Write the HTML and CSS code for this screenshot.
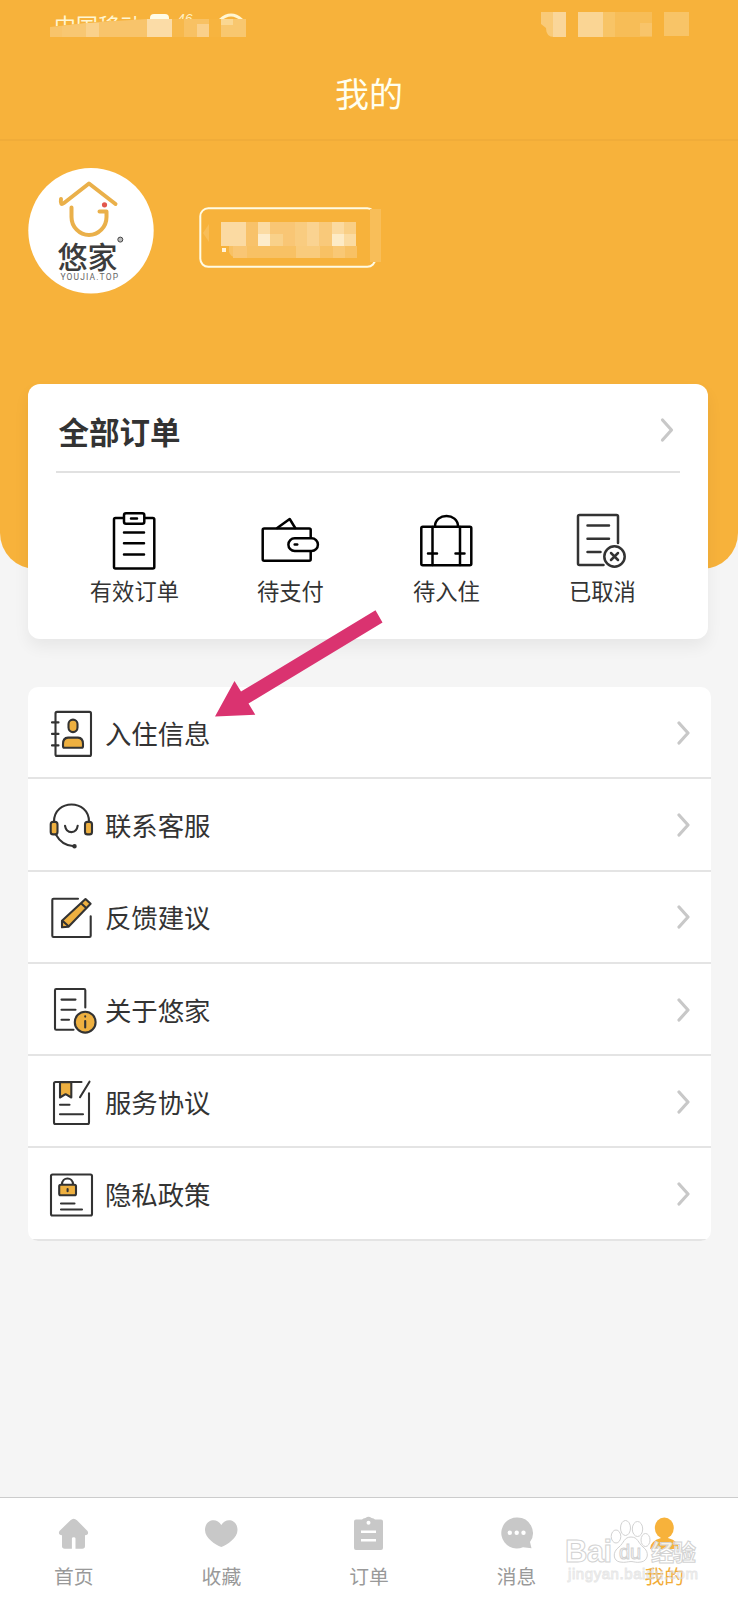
FILE: index.html
```html
<!DOCTYPE html>
<html lang="zh-CN">
<head>
<meta charset="utf-8">
<title>我的</title>
<link rel="stylesheet" href="styles.css">
</head>
<body>
<div class="screen">
  <div class="hero">
    <svg class="statusbar" viewBox="0 0 738 50" width="738" height="50">
      <text x="54" y="33.500" class="carrier" textLength="88">中国移动</text>
      <rect x="150" y="14" width="19" height="16" rx="4" fill="#fffbe6"/>
      <text x="177" y="24" class="signal">46</text>
      <path d="M220 20q11-10 22 0" fill="none" stroke="#fff6d2" stroke-width="3"/>
      <path d="M48 27L98 22L148 19V38H48z" fill="#f7b23b"/>
      <path d="M50 27L98 22L148 19V37H50z" fill="#f8c46b"/>
      <path d="M62 26L86 23V37H62z" fill="#f8c772"/>
      <rect x="86" y="23" width="13" height="14" fill="#fad18b"/>
      <rect x="147" y="19" width="25" height="18" fill="#fbdca7"/>
      <rect x="172" y="19" width="12" height="18" fill="#f7b84b"/>
      <rect x="184" y="19" width="25" height="18" fill="#f8c163"/>
      <rect x="197" y="24" width="12" height="13" fill="#fad08b"/>
      <rect x="209" y="19" width="12" height="18" fill="#f7b43f"/>
      <rect x="221" y="19" width="25" height="18" fill="#f8c76f"/>
      <rect x="221" y="19" width="12" height="6" fill="#fad792"/>
      <path d="M541 12h13v25q-8 0-8-9l-5-4z" fill="#f9ca78"/>
      <rect x="553" y="12" width="13" height="25" fill="#fad699"/>
      <rect x="578" y="12" width="25" height="25" fill="#fad594"/>
      <rect x="603" y="12" width="12" height="25" fill="#f8c466"/>
      <rect x="615" y="12" width="37" height="25" fill="#f7bd57"/>
      <rect x="640" y="23" width="12" height="13" fill="#f8c46a"/>
      <rect x="664" y="12" width="25" height="24" fill="#f8c467"/>
    </svg>
    <header class="titlebar">我的</header>
    <div class="profile">
      <svg class="avatar" viewBox="28 168 126 126" width="126" height="126">
        <circle cx="91" cy="230.700" r="62.700" fill="#fff"/>
        <g fill="none" stroke="#eab04a" stroke-width="4" stroke-linecap="round" stroke-linejoin="round">
          <path d="M61 199q-1 7 3 4L89 183.500L115.500 204"/>
          <path d="M71.500 207.500V217a17.500 18 0 0 0 35 0V211.500H99.500"/>
        </g>
        <circle cx="104.500" cy="204.800" r="2.600" fill="#e2574c"/>
        <text x="57.500" y="267.500" class="brand" textLength="60">悠家</text>
        <circle cx="120.300" cy="239.600" r="2.500" fill="#bbb" stroke="#444" stroke-width="1"/>
        <text x="60.500" y="279.700" class="domain" textLength="57.500" lengthAdjust="spacing">YOUJIA.TOP</text>
      </svg>
      <svg class="nickname" viewBox="196 204 190 68" width="190" height="68">
        <rect x="200.300" y="208.300" width="175" height="58.500" rx="8" fill="none" stroke="#fffbe4" stroke-width="2"/>
        <path d="M209 224v18l-6-9z" fill="#f8bd57"/>
        <rect x="370" y="209" width="11" height="53" fill="#f8be59"/>
        <path d="M229 246h128v12h-118q-8 0-10-6z" fill="#f8c164"/>
        <rect x="233" y="246" width="14" height="12" fill="#f9c674"/>
        <rect x="296" y="246" width="24" height="12" fill="#f9cb7c"/>
        <rect x="333" y="246" width="12" height="12" fill="#f9c875"/>
        <rect x="221" y="222" width="25" height="24" fill="#fbdaa2"/>
        <rect x="246" y="222" width="12" height="24" fill="#f8c26a"/>
        <rect x="258" y="222" width="12" height="12" fill="#fbdba3"/>
        <rect x="258" y="234" width="12" height="12" fill="#fdeccb"/>
        <rect x="270" y="222" width="25" height="24" fill="#f9c675"/>
        <rect x="270" y="234" width="13" height="12" fill="#f9d18a"/>
        <rect x="295" y="222" width="12" height="24" fill="#f9cc80"/>
        <rect x="307" y="222" width="12" height="24" fill="#fad391"/>
        <rect x="319" y="222" width="13" height="24" fill="#f9c97a"/>
        <rect x="332" y="222" width="12" height="12" fill="#fbdaa0"/>
        <rect x="332" y="234" width="12" height="12" fill="#fdebc6"/>
        <rect x="344" y="222" width="12" height="12" fill="#f9cf86"/>
        <rect x="344" y="234" width="12" height="12" fill="#fbdba1"/>
        <rect x="222" y="248" width="4" height="4" fill="#fff3d8"/>
      </svg>
    </div>
  </div>

  <section class="orders">
    <div class="orders-head">
      <h2>全部订单</h2>
      <svg class="chevron" viewBox="0 0 14 26" width="14" height="26"><path d="M2.500 3L11.500 13L2.500 23"/></svg>
    </div>
    <div class="order-types">
      <div class="order-type">
        <svg viewBox="105 510 60 62" width="60" height="62">
          <rect x="115" y="518" width="40.300" height="50.500" rx="1.500"/>
          <rect x="125" y="513.300" width="20.300" height="10.400" rx="2" fill="#fff"/>
          <path d="M132 518.600h6M125 532.500h20M125 543.200h20M125 554.400h20"/>
        </svg>
        <span>有效订单</span>
      </div>
      <div class="order-type">
        <svg viewBox="260.300 510 60 62" width="60" height="62">
          <rect x="263" y="528.500" width="48" height="32.300" rx="1.500"/>
          <path d="M277.500 528L290 519L295.500 528"/>
          <rect x="288.700" y="538.300" width="29.500" height="12.700" rx="6.300" fill="#fff"/>
          <path d="M295 544.600h2.500"/>
        </svg>
        <span>待支付</span>
      </div>
      <div class="order-type">
        <svg viewBox="416 510 60 62" width="60" height="62">
          <rect x="421.300" y="526.700" width="50" height="38.500" rx="1.500"/>
          <path d="M432.500 527v38M460 527v38M435 526.500C435 512.500 458 512.500 458 526.500M428 553.500h9M455.500 553.500h9"/>
        </svg>
        <span>待入住</span>
      </div>
      <div class="order-type gray">
        <svg viewBox="572 510 60 62" width="60" height="62">
          <path d="M618 543V516.500q0-1.500-1.500-1.500H579.500q-1.500 0-1.500 1.500V563.500q0 1.500 1.500 1.500H603.500M587.500 525.600h21.500M587.500 538.700h21.500M587.500 552h13"/>
          <circle cx="614.500" cy="556.500" r="10.200"/>
          <path d="M611 553l7 7M618 553l-7 7"/>
        </svg>
        <span>已取消</span>
      </div>
    </div>
  </section>

  <section class="menu">
    <div class="menu-row">
      <svg class="menu-icon" viewBox="48 707.100 50 50" width="50" height="50">
        <rect x="55.500" y="711" width="35.500" height="44" rx="1.500"/>
        <path d="M52 721.500h6.500M52 733h6.500M52 744.500h6.500"/>
        <rect class="accent" x="68.500" y="718.700" width="9" height="12.500" rx="4.500"/>
        <path class="accent" d="M64.500 746.800q-1.500 0-1.500-1.500V743q0-6 5-6.300h10q5 .3 5 6.300v2.300q0 1.500-1.500 1.500z"/>
      </svg>
      <span>入住信息</span>
      <svg class="chevron" viewBox="0 0 14 26" width="14" height="26"><path d="M2 3L11 13L2 23"/></svg>
    </div>
    <div class="menu-row">
      <svg class="menu-icon" viewBox="48 799.300 50 50" width="50" height="50">
        <path d="M54 821C54 798 89 798 89 821M65 825C66.500 833.500 76.500 833.500 77.700 825M56 834Q62 845 74 845.500"/>
        <rect class="accent" x="50.700" y="821.200" width="6.800" height="12.500" rx="2.500"/>
        <rect class="accent" x="85" y="821.200" width="7" height="12.500" rx="2.500"/>
        <circle cx="74.500" cy="845.500" r="1.200"/>
      </svg>
      <span>联系客服</span>
      <svg class="chevron" viewBox="0 0 14 26" width="14" height="26"><path d="M2 3L11 13L2 23"/></svg>
    </div>
    <div class="menu-row">
      <svg class="menu-icon" viewBox="48 891.700 50 50" width="50" height="50">
        <path d="M78 898.500H53.500q-1.200 0-1.200 1.200V935.500q0 1.200 1.200 1.200H89.500q1.200 0 1.200-1.200V916"/>
        <path class="accent" d="M62 927V920.500L85.500 898.700L90.600 903.500L68.500 926.500zM81 903l5.500 5M62.500 920.500l6 5.500"/>
      </svg>
      <span>反馈建议</span>
      <svg class="chevron" viewBox="0 0 14 26" width="14" height="26"><path d="M2 3L11 13L2 23"/></svg>
    </div>
    <div class="menu-row">
      <svg class="menu-icon" viewBox="48 984 50 50" width="50" height="50">
        <path d="M85.300 1006.500V989.200q0-1.200-1.200-1.200H56.200q-1.200 0-1.200 1.200V1027.500q0 1.200 1.200 1.200H73.500M61.500 998.600H75.500M61.500 1008.700H75.500M61.500 1018.800H69"/>
        <circle class="accent" cx="85.200" cy="1021.200" r="10.400"/>
        <path d="M85.200 1020v6.500M85.200 1015.400v.2"/>
      </svg>
      <span>关于悠家</span>
      <svg class="chevron" viewBox="0 0 14 26" width="14" height="26"><path d="M2 3L11 13L2 23"/></svg>
    </div>
    <div class="menu-row">
      <svg class="menu-icon" viewBox="48 1076.300 50 50" width="50" height="50">
        <path class="accent" d="M60 1081.500H71.300V1096.800L65.600 1093.500L60 1096.800z"/>
        <path d="M81.500 1081.300H55.500q-1.500 0-1.500 1.500V1121.500q0 1.800 1.500 1.800H87.500q1.500 0 1.500-1.500V1092.500M89.500 1081L80 1096.500M60 1104H69.500M60 1113.600H83"/>
      </svg>
      <span>服务协议</span>
      <svg class="chevron" viewBox="0 0 14 26" width="14" height="26"><path d="M2 3L11 13L2 23"/></svg>
    </div>
    <div class="menu-row">
      <svg class="menu-icon" viewBox="48 1168.500 50 50" width="50" height="50">
        <rect x="51" y="1174" width="41" height="41" rx="1.500"/>
        <path d="M62 1184C62 1176 73 1176 73 1184M61 1203H74.500M61 1209H82"/>
        <rect class="accent" x="59.200" y="1184.300" width="16.800" height="10.500" rx="1.500"/>
        <path d="M67.600 1188.500v2.200"/>
      </svg>
      <span>隐私政策</span>
      <svg class="chevron" viewBox="0 0 14 26" width="14" height="26"><path d="M2 3L11 13L2 23"/></svg>
    </div>
  </section>

  <nav class="tabbar">
    <div class="tab">
      <svg viewBox="54 1514 40 40" width="40" height="40"><path d="M70.500 1520.200q3.200-3 6.400 0L87.500 1531q2 3.500-2.500 4.200V1546q0 2.700-2.700 2.700H75.500V1538.500q0-1.200-1.800-1.200t-1.800 1.200V1548.700H64.700q-2.700 0-2.700-2.700V1535.200q-4.500-.7-2.500-4.200z"/></svg>
      <span>首页</span>
    </div>
    <div class="tab">
      <svg viewBox="201 1514 40 40" width="40" height="40"><path d="M221.300 1525C217 1517 205 1519 205 1530C205 1538 215 1544.500 221.300 1547C227.500 1544.500 237.500 1538 237.500 1530C237.500 1519 225.500 1517 221.300 1525z"/></svg>
      <span>收藏</span>
    </div>
    <div class="tab">
      <svg viewBox="349 1514 40 40" width="40" height="40"><path d="M356 1519.500h6q1-1.500 3.500-1.500q3-2.500 6 0q2.500 0 3.500 1.500h6q2 0 2 2V1548q0 2-2 2H356q-2 0-2-2V1521.500q0-2 2-2z"/><circle cx="368.500" cy="1522.700" r="2" fill="#fff"/><path d="M361 1531.800h15M361 1540.300h15" stroke="#fff" stroke-width="2.600"/></svg>
      <span>订单</span>
    </div>
    <div class="tab">
      <svg viewBox="497 1514 40 40" width="40" height="40"><path d="M517 1517.500A15.500 15.500 0 1 0 523 1547.200L531.500 1548.300L530 1542A15.500 15.500 0 0 0 517 1517.500z"/><g fill="#fff"><circle cx="509.800" cy="1532.800" r="2.200"/><circle cx="516.700" cy="1532.800" r="2.200"/><circle cx="523.500" cy="1532.800" r="2.200"/></g></svg>
      <span>消息</span>
    </div>
    <div class="tab active">
      <svg viewBox="644 1514 40 40" width="40" height="40"><ellipse cx="664.300" cy="1528" rx="9.500" ry="10.500"/><path d="M650 1549Q650 1541 661 1538V1535h7v3Q679 1541 679 1549z"/></svg>
      <span>我的</span>
    </div>
  </nav>

  <svg class="pointer" viewBox="210 605 180 117" width="180" height="117">
    <path d="M215 716.500L234.500 681L241 691.500L375.500 610.300L382.500 622.500L248.500 703.500L255.300 714.800z" fill="#da3370"/>
  </svg>

  <svg class="watermark" viewBox="560 1515 145 75" width="145" height="75">
    <g fill="#fff" fill-opacity=".85" stroke="#d2d2d2" stroke-width="1">
      <text x="565" y="1561.500" class="wm-bai" textLength="47">Bai</text>
      <ellipse cx="616" cy="1536.500" rx="4.800" ry="6.500"/>
      <ellipse cx="625.500" cy="1528" rx="5" ry="7.500"/>
      <ellipse cx="637.500" cy="1529" rx="5.200" ry="7.500"/>
      <ellipse cx="645.500" cy="1540" rx="4.500" ry="6.500"/>
      <path d="M631 1537C638 1537 638 1543 643 1547C650 1552 648 1561 641 1562C636 1563 634 1561.500 631 1561.500S625 1563 620 1562C613 1561 612 1552 619 1547C624 1543 624 1537 631 1537z"/>
      <text x="619" y="1559" class="wm-du" textLength="22">du</text>
      <text x="651" y="1560.500" class="wm-exp" textLength="45">经验</text>
      <text x="568" y="1579" class="wm-url" textLength="130">jingyan.baidu.com</text>
    </g>
  </svg>
</div>
</body>
</html>
```
FILE: styles.css
```css
* { box-sizing: border-box; }

body {
  margin: 0;
  background: #f5f5f5;
  color: #333;
  font-family: "Noto Sans CJK SC", sans-serif;
}

svg { display: block; flex: none; }

.screen {
  position: relative;
  display: flex;
  flex-direction: column;
  width: 738px;
  height: 1600px;
  overflow: hidden;
}

.hero {
  flex: none;
  height: 569px;
  background: #f7b23b;
  border-radius: 0 0 36px 36px;
}

.titlebar {
  height: 91px;
  border-bottom: 2px solid #f0ac39;
  color: #fffff0;
  font-size: 34px;
  line-height: 85px;
  text-align: center;
}

.profile {
  display: flex;
  gap: 42px;
  padding: 27px 28px 0;
}

.nickname { margin-top: 36px; }

.carrier { font-size: 22px; fill: #fff6d2; }
.signal { font: italic 14px "Liberation Sans", sans-serif; fill: #fff0c4; }
.brand { font-size: 30px; fill: #3c3c3c; font-weight: 500; }
.domain { font-family: "Liberation Sans Narrow", Roboto, sans-serif; font-size: 8.500px; fill: #666; }

.orders {
  flex: none;
  width: 680px;
  height: 255px;
  margin: -185px 0 0 28.400px;
  padding: 0 28px;
  background: #fff;
  border-radius: 12px;
  box-shadow: 0 8px 16px rgba(0, 0, 0, .06);
}

.orders-head {
  display: flex;
  align-items: center;
  justify-content: space-between;
  height: 89px;
  padding: 5px 6px 0 2px;
  border-bottom: 2px solid #e1e1e1;
}

.orders-head h2 {
  margin: 1px 0 0;
  font-size: 30.500px;
  line-height: 40px;
  font-weight: 700;
}

.chevron {
  fill: none;
  stroke: #c8c8c8;
  stroke-width: 3.200;
  stroke-linecap: round;
  stroke-linejoin: round;
}

.order-types {
  display: grid;
  grid-template-columns: repeat(4, 1fr);
  padding-top: 37px;
}

.order-type {
  display: flex;
  flex-direction: column;
  align-items: center;
  gap: 2px;
  font-size: 22.300px;
  line-height: 32px;
}

.order-type svg {
  fill: none;
  stroke: #000;
  stroke-width: 2.500;
  stroke-linecap: round;
  stroke-linejoin: round;
}

.order-type.gray svg { stroke: #333; }

.menu {
  flex: none;
  width: 683px;
  margin: 48px 0 0 28.400px;
  background: #fff;
  border-radius: 10px;
  overflow: hidden;
}

.menu-row {
  display: flex;
  align-items: center;
  height: 92.300px;
  padding: 1px 20px 0;
  border-bottom: 2px solid #e4e4e4;
  font-size: 26.400px;
}

.menu-row span { flex: 1; padding-left: 6.500px; line-height: 40px; }

.menu-icon {
  fill: none;
  stroke: #333;
  stroke-width: 2.100;
  stroke-linecap: round;
  stroke-linejoin: round;
}

.menu-icon .accent { fill: #eeb040; }

.tabbar {
  display: grid;
  grid-template-columns: repeat(5, 1fr);
  height: 103px;
  margin-top: auto;
  padding-top: 16px;
  border-top: 1px solid #ccc;
  background: #fff;
}

.tab {
  display: flex;
  flex-direction: column;
  align-items: center;
  gap: 7px;
  color: #999;
  font-size: 19.800px;
  line-height: 30px;
}

.tab svg { fill: #c8c8c8; }
.tab.active { color: #f2ac36; }
.tab.active svg { fill: #f7b23b; }

.pointer { position: absolute; left: 210px; top: 605px; }
.watermark { position: absolute; left: 560px; top: 1515px; }

.wm-bai { font: bold 31px "Liberation Sans", sans-serif; }
.wm-du { font: 20px "Liberation Sans", sans-serif; }
.wm-exp { font-size: 23px; font-weight: 700; }
.wm-url { font: 15px "Liberation Sans", sans-serif; fill-opacity: .3; stroke-opacity: .55; }
```
